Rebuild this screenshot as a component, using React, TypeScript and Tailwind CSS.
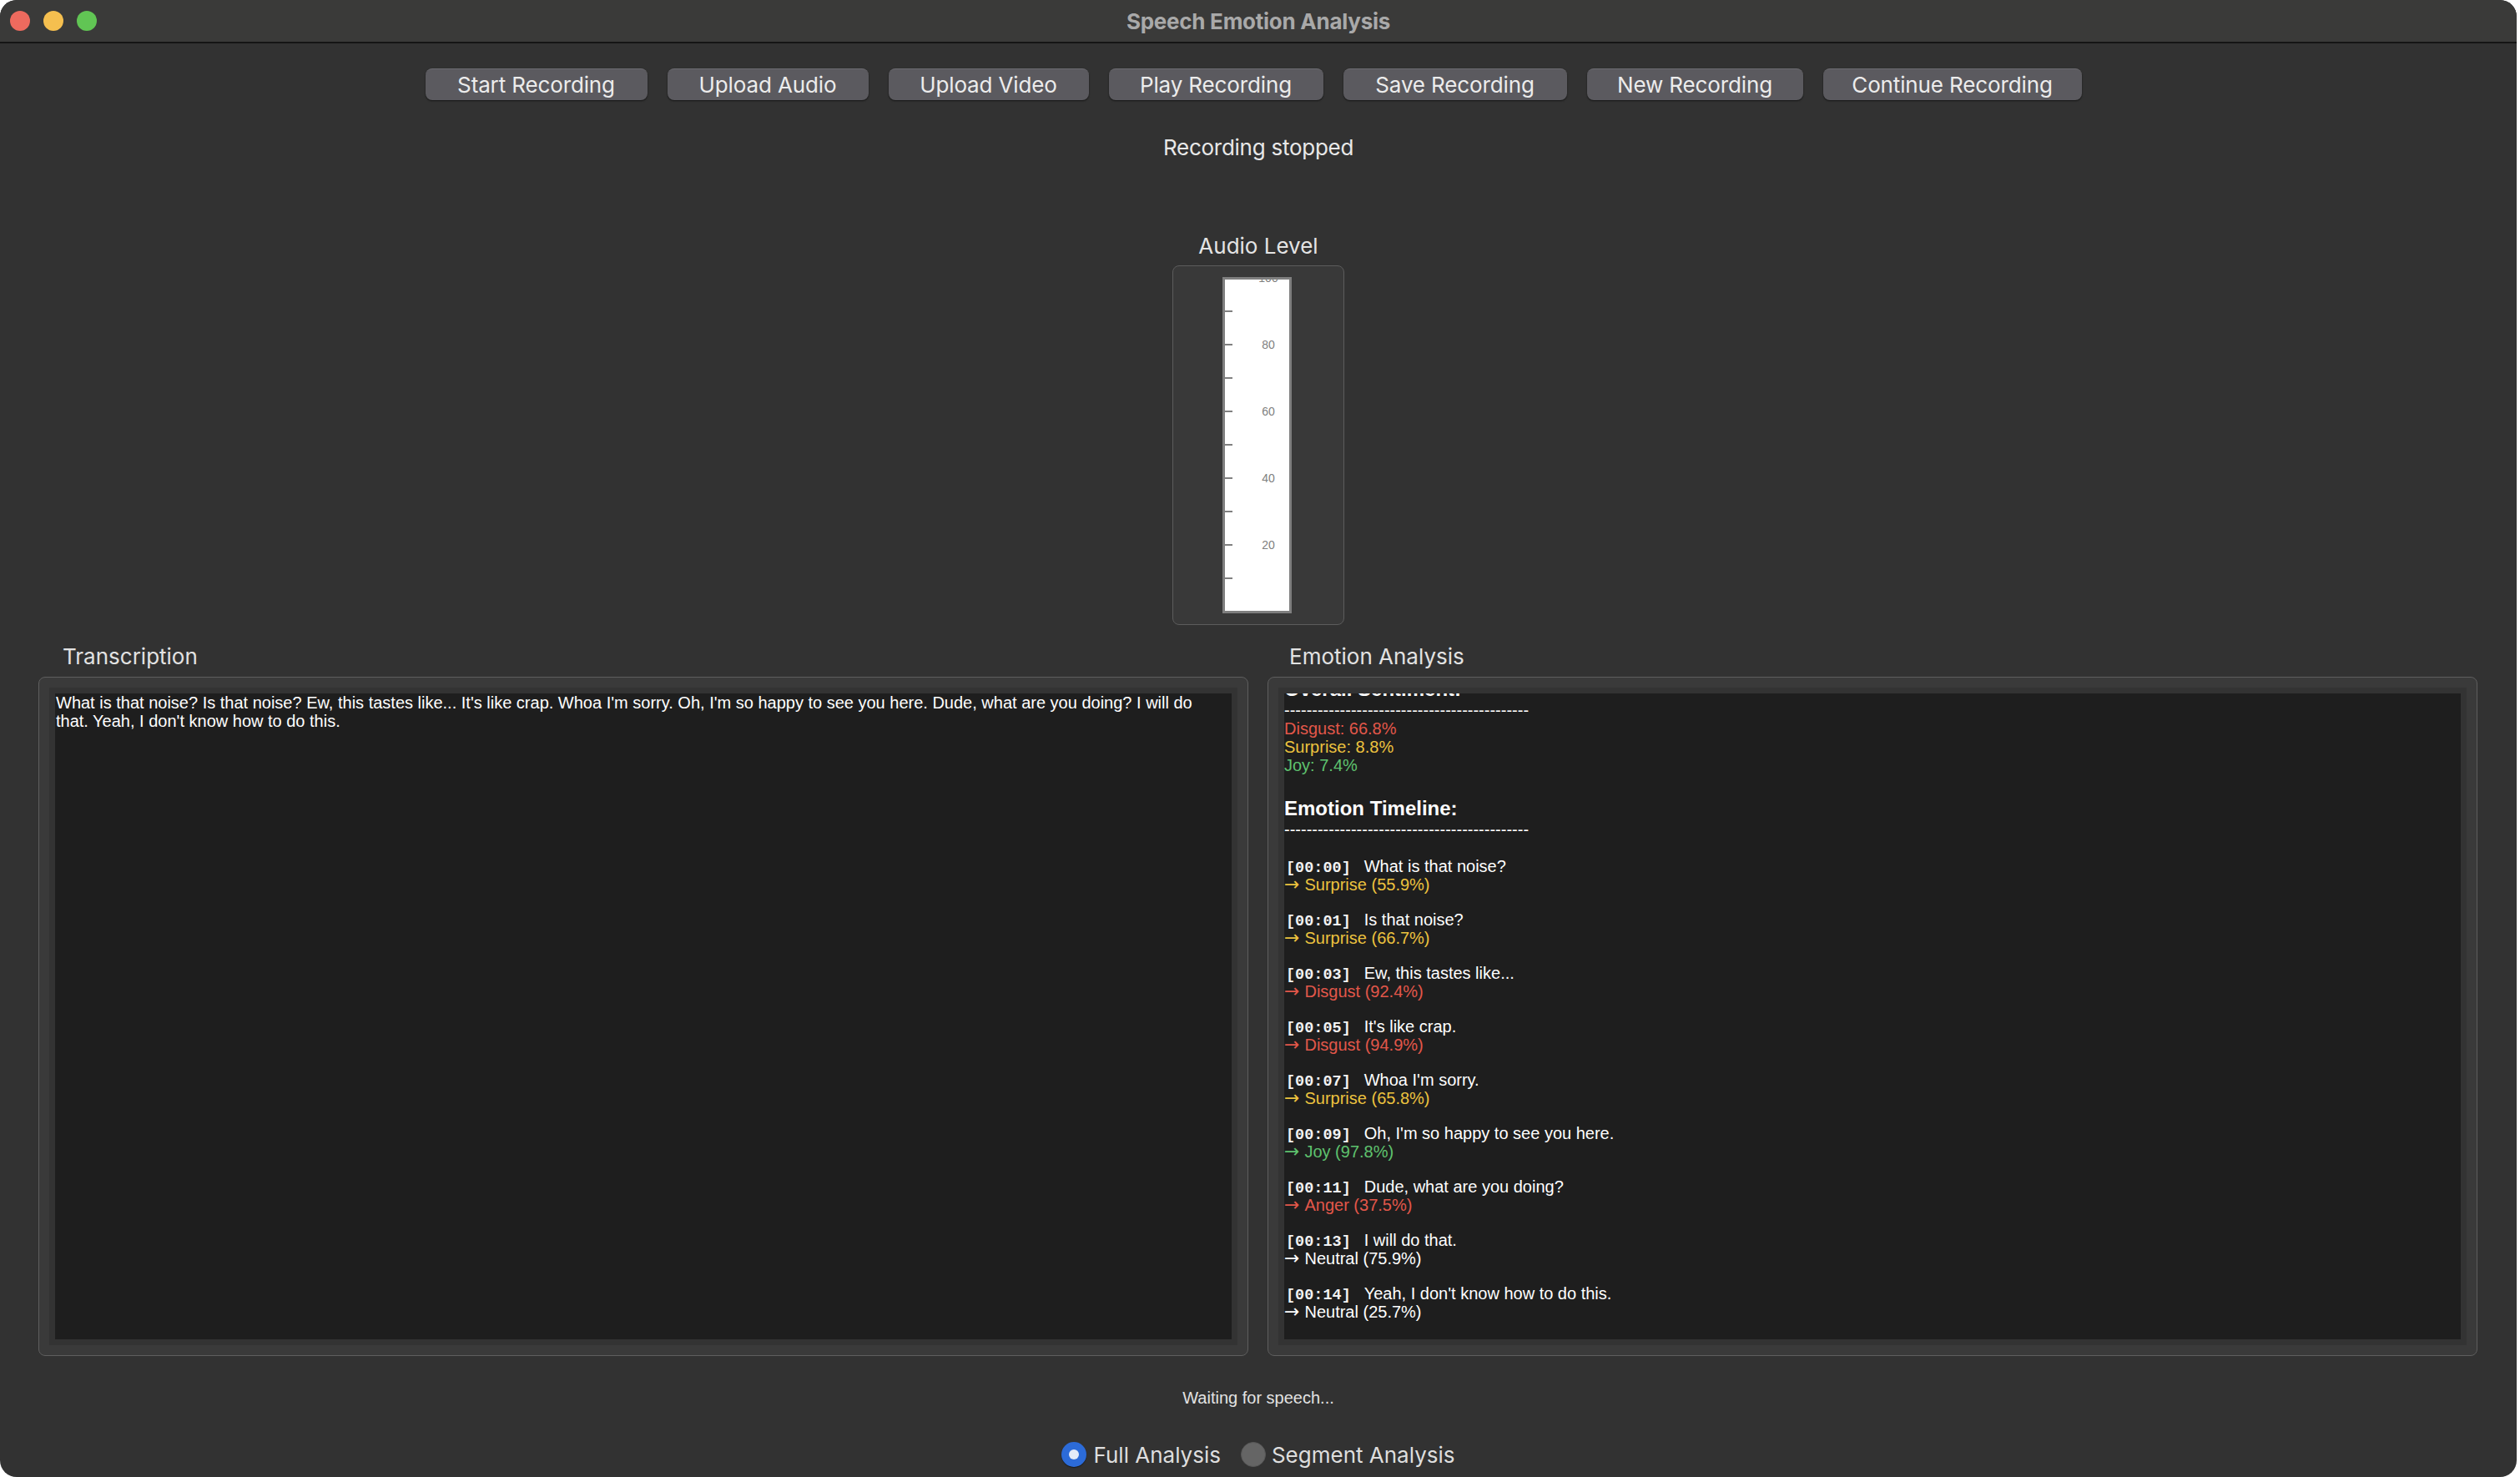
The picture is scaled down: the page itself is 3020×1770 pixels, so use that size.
import React from "react";

type Entry = { time: string; text: string; emotion: string; score: string };

const entries: Entry[] = [
  { time: "00:00", text: "What is that noise?", emotion: "Surprise", score: "55.9" },
  { time: "00:01", text: "Is that noise?", emotion: "Surprise", score: "66.7" },
  { time: "00:03", text: "Ew, this tastes like...", emotion: "Disgust", score: "92.4" },
  { time: "00:05", text: "It's like crap.", emotion: "Disgust", score: "94.9" },
  { time: "00:07", text: "Whoa I'm sorry.", emotion: "Surprise", score: "65.8" },
  { time: "00:09", text: "Oh, I'm so happy to see you here.", emotion: "Joy", score: "97.8" },
  { time: "00:11", text: "Dude, what are you doing?", emotion: "Anger", score: "37.5" },
  { time: "00:13", text: "I will do that.", emotion: "Neutral", score: "75.9" },
  { time: "00:14", text: "Yeah, I don't know how to do this.", emotion: "Neutral", score: "25.7" },
];

const emotionColor: Record<string, string> = {
  Surprise: "text-[#ecc23e]",
  Disgust: "text-[#e2574a]",
  Anger: "text-[#e2574a]",
  Joy: "text-[#5ec26e]",
  Neutral: "text-white",
};

const buttons = [
  { label: "Start Recording", w: "w-[266px]" },
  { label: "Upload Audio", w: "w-[241px]" },
  { label: "Upload Video", w: "w-[240px]" },
  { label: "Play Recording", w: "w-[257px]" },
  { label: "Save Recording", w: "w-[268px]" },
  { label: "New Recording", w: "w-[259px]" },
  { label: "Continue Recording", w: "w-[310px]" },
];

const DASHES = "--------------------------------------------";

const transcript =
  "What is that noise? Is that noise? Ew, this tastes like... It's like crap. Whoa I'm sorry. Oh, I'm so happy to see you here. Dude, what are you doing? I will do that. Yeah, I don't know how to do this.";

const LevelMeter: React.FC = () => {
  const ticks = [38, 78, 118, 158, 198, 238, 278, 318, 358];
  const labels = [
    { y: -2, t: "100" },
    { y: 78, t: "80" },
    { y: 158, t: "60" },
    { y: 238, t: "40" },
    { y: 318, t: "20" },
  ];
  return (
    <div className="w-[206px] h-[431px] border border-[#5c5c5c] rounded-[8px] bg-[#393939] flex items-center justify-center">
      <div className="w-[83px] h-[403px] border-[3px] border-[#7f7f7f] bg-white mr-[3px]">
        <svg width="77" height="397" viewBox="0 0 77 397" className="block">
          {ticks.map((y) => (
            <line key={y} x1="0" x2="9" y1={y} y2={y} stroke="#808080" strokeWidth="2" />
          ))}
          {labels.map((l) => (
            <text
              key={l.t}
              x="52"
              y={l.y + 5}
              textAnchor="middle"
              fontSize="14"
              fill="#808080"
              fontFamily="Liberation Sans, Arial, sans-serif"
            >
              {l.t}
            </text>
          ))}
        </svg>
      </div>
    </div>
  );
};

const Panel: React.FC<{ title: string; titlePad: string; children: React.ReactNode }> = ({
  title,
  titlePad,
  children,
}) => (
  <div className="flex-1 flex flex-col min-w-0">
    <div className={`${titlePad} h-[32px] leading-[32px] text-[26px] text-[#e2e2e2]`}>{title}</div>
    <div className="mt-[8px] h-[814px] border border-[#5e5e5e] rounded-[8px] bg-[#3a3a3a] p-[12px]">
      <div className="h-full border-[7px] border-[#333333]">
        <div className="h-full bg-[#1e1e1e] overflow-hidden font-['Liberation_Sans',Arial,sans-serif] text-[20px] leading-[22px] text-white">
          {children}
        </div>
      </div>
    </div>
  </div>
);

export default function App() {
  return (
    <div className="w-[3020px] h-[1770px] bg-white">
      <div className="w-[3016px] h-[1770px] bg-[#323232] rounded-[20px] overflow-hidden flex flex-col font-['Inter','Liberation_Sans',sans-serif] text-[#e6e6e6]">
        {/* title bar */}
        <div className="h-[52px] shrink-0 bg-[#3a3a39] border-b-2 border-[#151515] grid grid-cols-[1fr_auto_1fr] items-center">
          <div className="flex items-center gap-[16px] pl-[12px]">
            <div className="w-[24px] h-[24px] rounded-full bg-[#ed6a5e]" />
            <div className="w-[24px] h-[24px] rounded-full bg-[#f5bf4f]" />
            <div className="w-[24px] h-[24px] rounded-full bg-[#61c554]" />
          </div>
          <div className="text-[26px] font-bold text-[#a9a9a9] tracking-[-0.01em]">Speech Emotion Analysis</div>
          <div />
        </div>

        {/* controls */}
        <div className="mt-[30px] flex justify-center gap-[24px] pr-[12px]">
          {buttons.map((b) => (
            <button
              key={b.label}
              className={`${b.w} h-[38px] rounded-[8px] bg-[#5b5a5f] border-t border-[#6d6c71] shadow-[0_1px_2px_rgba(0,0,0,0.6)] text-[26px] leading-[36px] text-[#ececec] tracking-[-0.005em]`}
            >
              {b.label}
            </button>
          ))}
        </div>

        <div className="mt-[41px] h-[32px] leading-[32px] text-center text-[26px] text-[#e8e8e8] tracking-[-0.01em]">
          Recording stopped
        </div>

        <div className="mt-[86px] flex flex-col items-center">
          <div className="h-[32px] leading-[32px] text-[26px] text-[#e4e4e4]">Audio Level</div>
          <div className="mt-[7px]">
            <LevelMeter />
          </div>
        </div>

        {/* panels */}
        <div className="mt-[22px] flex gap-[23px] pl-[46px] pr-[47px]">
          <Panel title="Transcription" titlePad="pl-[29px]">
            <div className="pl-[1px] pr-[24px]">{transcript}</div>
          </Panel>
          <Panel title="Emotion Analysis" titlePad="pl-[26px]">
            <div className="-mt-[19px]">
              <div className="text-[24px] leading-[28px] font-bold">Overall Sentiment:</div>
              <div className="h-[22px]">{DASHES}</div>
              <div className="h-[22px] text-[#e2574a]">Disgust: 66.8%</div>
              <div className="h-[22px] text-[#ecc23e]">Surprise: 8.8%</div>
              <div className="h-[22px] text-[#5ec26e]">Joy: 7.4%</div>
              <div className="mt-[27px] text-[24px] leading-[28px] font-bold">Emotion Timeline:</div>
              <div className="h-[22px]">{DASHES}</div>
              <div className="mt-[22px] flex flex-col gap-[20px]">
                {entries.map((e) => (
                  <div key={e.time} className="h-[44px]">
                    <div className="h-[22px] flex items-baseline">
                      <span className="pl-[2px] font-['Liberation_Mono',monospace] text-[18.5px] leading-[22px] font-bold text-[#f2f2f2]">
                        [{e.time}]
                      </span>
                      <span className="ml-[16px] leading-[22px]">{e.text}</span>
                    </div>
                    <div className={`h-[22px] flex items-baseline ${emotionColor[e.emotion]}`}>
                      <span className="font-['DejaVu_Sans',sans-serif] text-[22px] leading-[22px]">→</span>
                      <span className="ml-[6px] leading-[22px]">
                        {e.emotion} ({e.score}%)
                      </span>
                    </div>
                  </div>
                ))}
              </div>
            </div>
          </Panel>
        </div>

        <div className="mt-[38px] h-[24px] leading-[24px] text-center text-[20px] text-[#e2e2e2] font-['Liberation_Sans',Arial,sans-serif]">
          Waiting for speech...
        </div>

        <div className="mt-[40px] h-[32px] flex items-center justify-center text-[26px] text-[#dedede]">
          <div className="w-[30px] h-[30px] rounded-full bg-[#2c6bd8] flex items-center justify-center shadow-[0_1px_1px_rgba(0,0,0,0.5)]">
            <div className="w-[12px] h-[12px] rounded-full bg-[#e4ebf8]" />
          </div>
          <span className="ml-[8px]">Full Analysis</span>
          <div className="ml-[24px] w-[30px] h-[30px] rounded-full bg-[#656565] border border-[#585858]" />
          <span className="ml-[7px]">Segment Analysis</span>
        </div>
      </div>
    </div>
  );
}
